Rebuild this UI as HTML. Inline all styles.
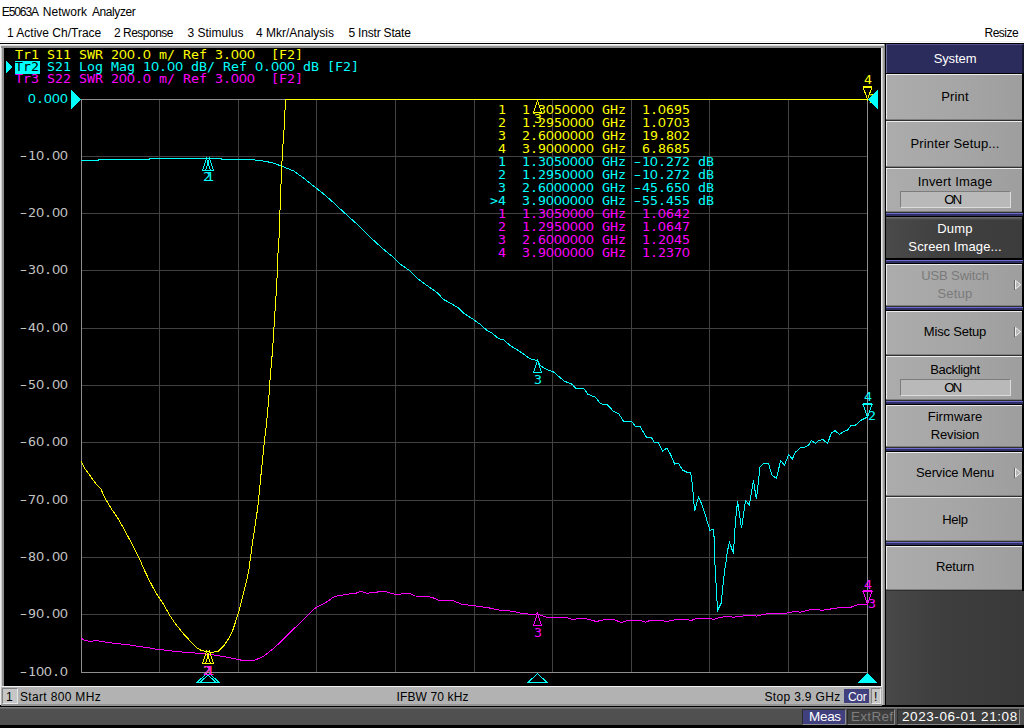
<!DOCTYPE html>
<html><head><meta charset="utf-8"><title>E5063A Network Analyzer</title>
<style>
html,body{margin:0;padding:0;}
body{width:1024px;height:728px;position:relative;overflow:hidden;background:#fff;font-family:"Liberation Sans",sans-serif;font-size:12px;color:#000;}
.abs{position:absolute;}
.ui{position:absolute;white-space:pre;font-family:"Liberation Sans",sans-serif;font-size:12px;line-height:14px;color:#000;}
.mono{position:absolute;white-space:pre;font-family:"DejaVu Sans Mono","Liberation Mono",monospace;font-size:12px;letter-spacing:0;line-height:13px;transform:scaleX(1.1073);transform-origin:0 0;}
.z{display:inline-block;width:7.2246px;text-align:center;font-family:"Liberation Sans",sans-serif;font-size:12.6px;line-height:13px;vertical-align:baseline;}
.h{display:inline-block;transform:scaleX(1.6);transform-origin:60% 50%;}
.y{color:#ffff00}.c{color:#00ffff}.m{color:#ff00ff}.g{color:#c4c4c4}
.skt{left:886px;width:138px;text-align:center;font-size:13px;line-height:16px;letter-spacing:0.2px;}
.sk{position:absolute;left:886px;width:138px;height:45px;background:linear-gradient(90deg,#9a9a9a,#a8a8a8 25%,#a8a8a8 60%,#9c9c9c);border-top:1px solid #dedede;border-bottom:1px solid #3a3a3a;font-size:13px;}
.sk span{position:absolute;left:0;width:138px;text-align:center;line-height:16px;white-space:pre;}
.sk.dk{background:linear-gradient(90deg,#4e4e4e,#444 40%,#3e3e3e);color:#fff;border-top-color:#666;}
.sk.dis{color:#7c7c7c;}
.bl{position:absolute;left:886px;width:138px;height:2px;background:#4c4c9e;border-top:1px solid #1c1c1c;border-bottom:1px solid #1c1c1c;}
.onbox{position:absolute;left:14px;top:24px;width:108px;height:14px;background:#b8b8b8;border:1px solid;border-color:#7a7a7a #d4d4d4 #d4d4d4 #7a7a7a;}
.arr{position:absolute;left:130px;top:16px;width:0;height:0;border-left:6px solid #c8c8c8;border-top:6px solid transparent;border-bottom:6px solid transparent;}
</style></head><body>
<div class="ui" style="left:1.7px;top:5px;"><span style="letter-spacing:-1.06px">E5063A </span><span style="position:absolute;left:41.1px;letter-spacing:0.03px">Network </span><span style="position:absolute;left:90.2px;letter-spacing:-0.39px">Analyzer</span></div>
<div class="ui" style="left:7px;top:26px;">1 Active Ch/Trace</div>
<div class="ui" style="left:114px;top:26px;letter-spacing:-0.5px;">2 Response</div>
<div class="ui" style="left:187.5px;top:26px;">3 Stimulus</div>
<div class="ui" style="left:256px;top:26px;">4 Mkr/Analysis</div>
<div class="ui" style="left:348.5px;top:26px;letter-spacing:-0.2px;">5 Instr State</div>
<div class="ui" style="left:984.5px;top:26px;letter-spacing:-0.5px;">Resize</div>

<div class="abs" style="left:0;top:43px;width:1024px;height:685px;background:#000;"></div>
<div class="abs" style="left:0;top:41px;width:1024px;height:1px;background:#f0f0f0;"></div>
<div class="abs" style="left:0;top:44px;width:885px;height:661px;background:linear-gradient(90deg,#ececec 0,#ececec 1px,#d0d0d0 1px,#d0d0d0 2px,#909090 2px,#909090 4px,#000 4px,#000 881px,#f2f2f2 881px,#e4e4e4 882px,#b0b0b0 883px,#8c8c8c 884px,#8c8c8c 885px);"></div>
<div class="abs" style="left:1px;top:44px;width:883px;height:4px;background:linear-gradient(180deg,#f8f8f8 0,#f8f8f8 1px,#d8d8d8 1px,#d8d8d8 2px,#909090 2px,#909090 4px);"></div>
<div class="abs" style="left:0;top:44px;width:1px;height:661px;background:#ececec;"></div>
<div class="abs" id="plotwin" style="left:4px;top:48px;width:877px;height:638px;background:#000;"></div>
<div class="abs" style="left:1px;top:686px;width:881px;height:20px;background:#b2b2b2;border-top:1px solid #f0f0f0;box-sizing:border-box;border-bottom:2px solid #949494"></div>
<div class="abs" style="left:2px;top:688px;width:14px;height:14px;background:#c6c6c6;border:1px solid;border-color:#808080 #e8e8e8 #e8e8e8 #808080;"></div>
<div class="ui" style="left:6px;top:690px;font-size:12px;">1</div>
<div class="ui" style="left:20px;top:690px;font-size:12px;letter-spacing:0.33px">Start 800 MHz</div>
<div class="ui" style="left:396.5px;top:690px;font-size:12px;letter-spacing:0.13px">IFBW 70 kHz</div>
<div class="ui" style="left:764.5px;top:690px;font-size:12px;letter-spacing:0.33px">Stop 3.9 GHz</div>
<div class="abs" style="left:844px;top:689px;width:25px;height:14px;background:#40407e;"></div>
<div class="ui" style="left:848px;top:690px;font-size:12px;letter-spacing:-0.35px;color:#fff;">Cor</div>
<div class="abs" style="left:871px;top:688px;width:8px;height:14px;background:#c6c6c6;border:1px solid;border-color:#808080 #e8e8e8 #e8e8e8 #808080;"></div>
<div class="ui" style="left:874px;top:690px;font-size:12px;">!</div>
<div class="abs" style="left:0;top:706px;width:1024px;height:1px;background:#000;"></div>
<div class="abs" style="left:885px;top:705px;width:139px;height:1px;background:#000;"></div>
<div class="abs" style="left:0;top:707px;width:1024px;height:18px;background:linear-gradient(180deg,#7c7c7c 0,#7c7c7c 1px,#666 1px,#666 2px,#505050 2px,#505050 100%);"></div>
<div class="abs" style="left:0;top:725px;width:1024px;height:3px;background:#000;"></div>
<div class="abs" style="left:802px;top:709px;width:42px;height:14px;background:#40407e;border:1px solid;border-color:#2a2a2a #8c8c8c #8c8c8c #2a2a2a;"></div>
<div class="ui" style="left:809px;top:709px;font-size:13.5px;line-height:16px;letter-spacing:-0.3px;color:#fff;">Meas</div>
<div class="abs" style="left:847px;top:709px;width:46px;height:14px;background:#3e3e3e;border:1px solid;border-color:#2a2a2a #8a8a8a #8a8a8a #2a2a2a;"></div>
<div class="ui" style="left:851px;top:709px;font-size:13.5px;line-height:16px;letter-spacing:0.3px;color:#7e7e7e;">ExtRef</div>
<div class="abs" style="left:897px;top:709px;width:121px;height:14px;background:#3e3e3e;border:1px solid;border-color:#2a2a2a #8a8a8a #8a8a8a #2a2a2a;"></div>
<div class="ui" style="left:902px;top:709px;font-size:13.5px;line-height:16px;letter-spacing:0.57px;color:#fff;">2023-06-01 21:08</div>
<div class="abs" style="left:886px;top:44px;width:138px;height:661px;background:linear-gradient(90deg,#484848,#3e3e3e 40%,#393939);"></div>
<div class="abs" style="left:886px;top:44px;width:138px;height:29px;background:#2c2c5c;border-left:1px solid #6c6c9c;border-top:1px solid #50508a;border-right:2px solid #16162e;box-sizing:border-box;"></div>
<div class="abs" style="left:886px;top:73px;width:138px;height:518px;background:#000;"></div>
<div class="ui skt" style="top:51px;color:#fff;letter-spacing:-0.1px">System</div>
<div class="abs" style="left:886px;top:74px;width:136px;height:47px;background:linear-gradient(90deg,#acacac,#a6a6a6 50%,#9e9e9e);"></div>
<div class="abs" style="left:886px;top:74px;width:136px;height:1px;background:#ececec;"></div>
<div class="abs" style="left:886px;top:74px;width:1px;height:45px;background:#ececec;"></div>
<div class="abs" style="left:886px;top:119px;width:136px;height:1px;background:#7e7e7e;"></div>
<div class="abs" style="left:886px;top:120px;width:136px;height:1px;background:#303030;"></div>
<div class="ui skt" style="top:89px;color:#000;letter-spacing:0.2px">Print</div>
<div class="abs" style="left:886px;top:121px;width:136px;height:47px;background:linear-gradient(90deg,#acacac,#a6a6a6 50%,#9e9e9e);"></div>
<div class="abs" style="left:886px;top:121px;width:136px;height:1px;background:#ececec;"></div>
<div class="abs" style="left:886px;top:121px;width:1px;height:45px;background:#ececec;"></div>
<div class="abs" style="left:886px;top:166px;width:136px;height:1px;background:#7e7e7e;"></div>
<div class="abs" style="left:886px;top:167px;width:136px;height:1px;background:#303030;"></div>
<div class="ui skt" style="top:136px;color:#000;letter-spacing:0.15px">Printer Setup...</div>
<div class="abs" style="left:886px;top:168px;width:136px;height:45px;background:linear-gradient(90deg,#acacac,#a6a6a6 50%,#9e9e9e);"></div>
<div class="abs" style="left:886px;top:168px;width:136px;height:1px;background:#ececec;"></div>
<div class="abs" style="left:886px;top:168px;width:1px;height:43px;background:#ececec;"></div>
<div class="abs" style="left:886px;top:211px;width:136px;height:1px;background:#7e7e7e;"></div>
<div class="abs" style="left:886px;top:212px;width:136px;height:1px;background:#303030;"></div>
<div class="abs" style="left:886px;top:213px;width:137px;height:1px;background:#6c6ccc;"></div>
<div class="abs" style="left:886px;top:214px;width:137px;height:2px;background:#2e2e62;"></div>
<div class="abs" style="left:900px;top:191px;width:109px;height:15px;background:#b9b9b9;border:1px solid;border-color:#7c7c7c #dcdcdc #dcdcdc #7c7c7c;"></div>
<div class="ui skt" style="top:174px;color:#000;letter-spacing:0.2px">Invert Image</div>
<div class="ui skt" style="top:192px;color:#000;letter-spacing:-1.5px;left:883.5px;">ON</div>
<div class="abs" style="left:886px;top:217px;width:136px;height:42px;background:linear-gradient(90deg,#4a4a4a,#404040 40%,#3c3c3c);"></div>
<div class="abs" style="left:886px;top:217px;width:136px;height:3px;background:linear-gradient(180deg,#7c7c7c,#404040);opacity:.8"></div>
<div class="abs" style="left:886px;top:258px;width:136px;height:2px;background:#000;"></div>
<div class="abs" style="left:886px;top:260px;width:137px;height:1px;background:#6c6ccc;"></div>
<div class="abs" style="left:886px;top:261px;width:137px;height:2px;background:#2e2e62;"></div>
<div class="ui skt" style="top:221px;color:#fff;letter-spacing:0.2px">Dump</div>
<div class="ui skt" style="top:239px;color:#fff;letter-spacing:0.1px;">Screen Image...</div>
<div class="abs" style="left:886px;top:264px;width:136px;height:43px;background:linear-gradient(90deg,#acacac,#a6a6a6 50%,#9e9e9e);"></div>
<div class="abs" style="left:886px;top:264px;width:136px;height:1px;background:#ececec;"></div>
<div class="abs" style="left:886px;top:264px;width:1px;height:41px;background:#ececec;"></div>
<div class="abs" style="left:886px;top:305px;width:136px;height:1px;background:#7e7e7e;"></div>
<div class="abs" style="left:886px;top:306px;width:136px;height:1px;background:#303030;"></div>
<div class="abs" style="left:886px;top:307px;width:137px;height:1px;background:#6c6ccc;"></div>
<div class="abs" style="left:886px;top:308px;width:137px;height:2px;background:#2e2e62;"></div>
<div class="ui skt" style="top:268px;color:#7a7a7a;letter-spacing:-0.1px">USB Switch</div>
<div class="ui skt" style="top:286px;color:#7a7a7a;letter-spacing:0.2px;">Setup</div>
<svg class="abs" style="left:1013px;top:279px" width="10" height="12" viewBox="0 0 10 12"><path d="M1.5 1V11" stroke="#666" stroke-width="1" fill="none"/><path d="M2.5 1.5L7.8 5.75L2.5 10Z" fill="#b6b6b6" stroke="#f0f0f0" stroke-width="1"/></svg>
<div class="abs" style="left:886px;top:311px;width:136px;height:45px;background:linear-gradient(90deg,#acacac,#a6a6a6 50%,#9e9e9e);"></div>
<div class="abs" style="left:886px;top:311px;width:136px;height:1px;background:#ececec;"></div>
<div class="abs" style="left:886px;top:311px;width:1px;height:43px;background:#ececec;"></div>
<div class="abs" style="left:886px;top:354px;width:136px;height:1px;background:#7e7e7e;"></div>
<div class="abs" style="left:886px;top:355px;width:136px;height:1px;background:#303030;"></div>
<div class="ui skt" style="top:324px;color:#000;letter-spacing:-0.2px">Misc Setup</div>
<svg class="abs" style="left:1013px;top:326px" width="10" height="12" viewBox="0 0 10 12"><path d="M1.5 1V11" stroke="#666" stroke-width="1" fill="none"/><path d="M2.5 1.5L7.8 5.75L2.5 10Z" fill="#b6b6b6" stroke="#f0f0f0" stroke-width="1"/></svg>
<div class="abs" style="left:886px;top:356px;width:136px;height:45px;background:linear-gradient(90deg,#acacac,#a6a6a6 50%,#9e9e9e);"></div>
<div class="abs" style="left:886px;top:356px;width:136px;height:1px;background:#ececec;"></div>
<div class="abs" style="left:886px;top:356px;width:1px;height:43px;background:#ececec;"></div>
<div class="abs" style="left:886px;top:399px;width:136px;height:1px;background:#7e7e7e;"></div>
<div class="abs" style="left:886px;top:400px;width:136px;height:1px;background:#303030;"></div>
<div class="abs" style="left:886px;top:401px;width:137px;height:1px;background:#6c6ccc;"></div>
<div class="abs" style="left:886px;top:402px;width:137px;height:2px;background:#2e2e62;"></div>
<div class="abs" style="left:900px;top:379px;width:109px;height:15px;background:#b9b9b9;border:1px solid;border-color:#7c7c7c #dcdcdc #dcdcdc #7c7c7c;"></div>
<div class="ui skt" style="top:362px;color:#000;letter-spacing:-0.37px">Backlight</div>
<div class="ui skt" style="top:380px;color:#000;letter-spacing:-1.5px;left:883.5px;">ON</div>
<div class="abs" style="left:886px;top:405px;width:136px;height:43px;background:linear-gradient(90deg,#acacac,#a6a6a6 50%,#9e9e9e);"></div>
<div class="abs" style="left:886px;top:405px;width:136px;height:1px;background:#ececec;"></div>
<div class="abs" style="left:886px;top:405px;width:1px;height:41px;background:#ececec;"></div>
<div class="abs" style="left:886px;top:446px;width:136px;height:1px;background:#7e7e7e;"></div>
<div class="abs" style="left:886px;top:447px;width:136px;height:1px;background:#303030;"></div>
<div class="abs" style="left:886px;top:448px;width:137px;height:1px;background:#6c6ccc;"></div>
<div class="abs" style="left:886px;top:449px;width:137px;height:2px;background:#2e2e62;"></div>
<div class="ui skt" style="top:409px;color:#000;letter-spacing:0.06px">Firmware</div>
<div class="ui skt" style="top:427px;color:#000;letter-spacing:-0.2px;">Revision</div>
<div class="abs" style="left:886px;top:452px;width:136px;height:45px;background:linear-gradient(90deg,#acacac,#a6a6a6 50%,#9e9e9e);"></div>
<div class="abs" style="left:886px;top:452px;width:136px;height:1px;background:#ececec;"></div>
<div class="abs" style="left:886px;top:452px;width:1px;height:43px;background:#ececec;"></div>
<div class="abs" style="left:886px;top:495px;width:136px;height:1px;background:#7e7e7e;"></div>
<div class="abs" style="left:886px;top:496px;width:136px;height:1px;background:#303030;"></div>
<div class="ui skt" style="top:465px;color:#000;letter-spacing:-0.12px">Service Menu</div>
<svg class="abs" style="left:1013px;top:467px" width="10" height="12" viewBox="0 0 10 12"><path d="M1.5 1V11" stroke="#666" stroke-width="1" fill="none"/><path d="M2.5 1.5L7.8 5.75L2.5 10Z" fill="#b6b6b6" stroke="#f0f0f0" stroke-width="1"/></svg>
<div class="abs" style="left:886px;top:497px;width:136px;height:45px;background:linear-gradient(90deg,#acacac,#a6a6a6 50%,#9e9e9e);"></div>
<div class="abs" style="left:886px;top:497px;width:136px;height:1px;background:#ececec;"></div>
<div class="abs" style="left:886px;top:497px;width:1px;height:43px;background:#ececec;"></div>
<div class="abs" style="left:886px;top:540px;width:136px;height:1px;background:#7e7e7e;"></div>
<div class="abs" style="left:886px;top:541px;width:136px;height:1px;background:#303030;"></div>
<div class="abs" style="left:886px;top:542px;width:137px;height:1px;background:#6c6ccc;"></div>
<div class="abs" style="left:886px;top:543px;width:137px;height:2px;background:#2e2e62;"></div>
<div class="ui skt" style="top:512px;color:#000;letter-spacing:-0.3px">Help</div>
<div class="abs" style="left:886px;top:546px;width:136px;height:45px;background:linear-gradient(90deg,#acacac,#a6a6a6 50%,#9e9e9e);"></div>
<div class="abs" style="left:886px;top:546px;width:136px;height:1px;background:#ececec;"></div>
<div class="abs" style="left:886px;top:546px;width:1px;height:43px;background:#ececec;"></div>
<div class="abs" style="left:886px;top:589px;width:136px;height:1px;background:#7e7e7e;"></div>
<div class="abs" style="left:886px;top:590px;width:136px;height:1px;background:#303030;"></div>
<div class="ui skt" style="top:559px;color:#000;letter-spacing:-0.16px">Return</div>
<div class="mono y" style="left:868px;top:93px;">1</div>
<svg class="abs" style="left:0;top:0" width="1024" height="728" viewBox="0 0 1024 728" shape-rendering="crispEdges">
<path d="M159.5 99V673M81 156.5H868M238.5 99V673M81 213.5H868M316.5 99V673M81 270.5H868M395.5 99V673M81 328.5H868M474.5 99V673M81 385.5H868M552.5 99V673M81 442.5H868M631.5 99V673M81 500.5H868M709.5 99V673M81 557.5H868M788.5 99V673M81 614.5H868" stroke="#424242" stroke-width="1" fill="none"/>
<rect x="81.5" y="99.5" width="786" height="573" stroke="#8e8e8e" stroke-width="1" fill="none"/>
<polyline points="81.4,638.3 84.8,640.5 90.6,641.4 96.5,640.5 101.4,641.4 107.2,642.4 115.1,643.4 124.8,644.4 133.1,645.4 138.5,646.4 146.3,647.4 152.2,648.4 158.0,649.5 167.8,650.3 175.1,651.5 188.6,652.5 204.3,653.8 213.7,655.0 226.2,657.0 235.6,658.9 241.8,660.3 254.4,660.3 260.6,657.7 264.8,655.4 272.6,649.1 279.4,643.2 287.2,635.4 295.1,627.6 302.9,620.4 307.2,615.9 313.6,609.1 318.5,606.1 326.3,602.2 334.1,596.8 339.0,595.4 345.8,594.8 351.7,593.4 356.6,593.0 360.5,591.3 367.3,593.4 371.2,592.3 377.1,592.1 381.0,591.1 385.9,591.5 390.8,593.2 395.6,594.4 400.5,594.4 402.5,593.4 409.3,593.4 415.2,596.0 427.9,596.4 432.8,597.7 438.6,600.3 452.4,600.4 462.1,604.3 475.0,605.8 489.0,607.9 499.7,610.1 512.6,611.2 521.2,613.3 531.9,614.4 537.3,613.9 547.0,617.4 566.3,617.6 572.8,619.5 580.3,618.5 585.6,618.7 596.4,621.5 606.1,619.3 613.6,619.3 621.1,622.5 628.6,620.2 640.4,620.4 645.8,622.3 650.1,620.2 660.8,620.2 666.1,621.7 676.2,619.5 687.4,619.5 690.8,620.6 696.4,618.6 709.9,618.4 713.3,619.5 720.0,617.5 727.9,616.3 733.5,617.2 748.1,615.4 757.1,616.1 763.8,614.3 772.8,613.2 786.3,613.2 795.3,611.2 799.8,612.3 813.2,609.1 822.2,610.3 835.7,608.2 842.4,607.1 851.4,607.1 855.9,605.1 862.7,604.2 867.1,604.2" stroke="#ff00ff" stroke-width="1" fill="none"/>
<polyline points="81.0,160.5 98.0,160.5 98.0,159.5 149.0,159.5 149.0,158.5 221.0,158.5 221.0,159.5 247.8,159.5 259.5,160.3 272.2,162.7 281.9,166.2 293.7,171.0 303.4,177.9 313.2,185.7 323.0,193.5 332.7,201.9 342.5,211.1 352.3,219.9 359.7,226.6 364.6,231.9 376.3,242.8 385.1,250.6 392.9,256.9 399.7,263.7 409.5,270.5 419.2,279.9 428.0,286.2 436.8,292.4 443.7,299.5 451.5,303.8 458.3,307.7 464.2,313.5 473.9,319.8 480.8,324.8 486.6,330.1 492.5,333.4 498.3,338.5 503.8,339.9 509.7,345.2 521.4,352.5 530.2,358.9 537.4,360.5 540.9,366.1 547.8,370.0 553.6,372.0 564.4,381.2 572.2,384.3 576.1,389.0 583.9,388.6 587.8,394.1 595.6,397.4 600.5,403.8 607.3,404.6 613.2,411.1 619.0,414.0 623.3,421.0 631.7,421.4 635.1,426.1 640.1,426.5 646.4,437.0 651.3,437.4 654.6,442.9 658.1,442.3 662.4,451.1 666.9,448.2 670.8,455.0 674.7,464.1 678.6,463.3 682.5,470.0 687.2,472.4 690.7,472.4 692.7,487.6 694.6,511.1 698.5,497.0 701.3,503.2 706.0,517.3 709.9,530.2 713.1,529.5 714.6,540.8 714.7,559.5 715.8,579.6 716.9,599.6 717.6,610.3 721.5,602.5 722.5,588.8 723.7,579.0 724.7,569.8 725.9,562.5 727.4,551.2 729.5,542.1 733.4,553.5 735.4,522.0 737.6,500.9 741.5,528.3 745.5,500.4 749.4,505.1 753.4,480.1 756.4,499.3 760.0,467.2 763.9,463.3 768.6,463.8 771.8,475.0 776.5,478.5 780.6,460.5 784.5,465.2 788.6,454.5 792.3,459.2 795.3,452.3 800.7,447.5 804.5,447.5 808.8,445.0 811.2,440.5 815.7,443.4 818.4,440.7 822.7,439.4 827.6,443.4 831.3,433.0 835.1,430.6 839.6,434.6 843.1,431.7 847.4,430.3 851.2,425.4 855.5,425.2 860.3,420.6 867.3,417.1" stroke="#00ffff" stroke-width="1" fill="none"/>
<polyline points="81.3,461.3 84.8,468.6 90.6,476.4 95.5,483.2 101.0,489.1 105.3,498.8 111.2,508.6 118.0,518.4 123.5,528.1 128.7,537.9 134.0,547.7 138.9,557.4 143.6,568.5 149.3,580.3 155.3,591.8 163.6,604.4 169.8,615.4 176.1,624.8 183.9,634.2 191.8,642.8 196.4,647.5 201.1,650.3 206.6,651.7 212.1,652.5 218.4,651.1 223.8,645.9 228.5,638.9 232.5,631.1 235.6,621.7 238.7,612.3 241.1,602.9 243.4,593.5 245.8,584.1 248.9,570.0 251.8,547.7 254.7,528.1 257.6,508.6 259.6,489.1 261.5,469.5 263.2,453.0 264.6,440.0 266.4,424.4 268.8,398.0 270.4,375.0 272.7,348.6 274.7,315.6 276.7,286.0 278.0,253.0 279.4,232.0 280.4,196.4 281.4,176.0 282.3,154.5 283.9,132.0 285.0,110.0 285.5,99.5 867.0,99.5" stroke="#ffff00" stroke-width="1" fill="none"/>
<path d="M206.5 651.5L202.5 663.5H210.5Z" stroke="#ff00ff" stroke-width="1" fill="none"/>
<path d="M209.5 651.5L205.5 663.5H213.5Z" stroke="#ff00ff" stroke-width="1" fill="none"/>
<path d="M537.5 613.5L533.5 625.5H541.5Z" stroke="#ff00ff" stroke-width="1" fill="none"/>
<path d="M867.5 604L863.0 591.5H872.0Z M863.0 590.5H872.0" stroke="#ff00ff" stroke-width="1" fill="none"/>
<path d="M206.5 158.5L202.5 170.5H210.5Z" stroke="#00ffff" stroke-width="1" fill="none"/>
<path d="M209.5 158.5L205.5 170.5H213.5Z" stroke="#00ffff" stroke-width="1" fill="none"/>
<path d="M537.5 360.5L533.5 372.5H541.5Z" stroke="#00ffff" stroke-width="1" fill="none"/>
<path d="M867.5 417L863.0 404.5H872.0Z M863.0 403.5H872.0" stroke="#00ffff" stroke-width="1" fill="none"/>
<path d="M206.5 651.5L202.5 663.5H210.5Z" stroke="#ffff00" stroke-width="1" fill="none"/>
<path d="M209.5 651.5L205.5 663.5H213.5Z" stroke="#ffff00" stroke-width="1" fill="none"/>
<path d="M537.5 100.5L533.5 112.5H541.5Z" stroke="#ffff00" stroke-width="1" fill="none"/>
<path d="M867.5 99.5L863.0 87.0H872.0Z M863.0 86.0H872.0" stroke="#ffff00" stroke-width="1" fill="none"/>
<path d="M206.5 673.5L197.0 682.5H216.0Z" stroke="#00ffff" stroke-width="1" fill="none"/>
<path d="M209.5 673.5L200.0 682.5H219.0Z" stroke="#00ffff" stroke-width="1" fill="none"/>
<path d="M537.5 673.5L528.0 682.5H547.0Z" stroke="#00ffff" stroke-width="1" fill="none"/>
<path d="M867.5 673L857 683H878Z" fill="#00ffff"/>
<path d="M81 99.5L71 90V109Z" fill="#00ffff"/>
<path d="M868 99.5L878 90V109Z" fill="#00ffff"/>
<path d="M12 67L6 61V73Z" fill="#00ffff"/>
</svg>
<div class="mono y" style="left:15px;top:49px;">Tr1 S11 SWR 2<span class="z">0</span><span class="z">0</span>.<span class="z">0</span> m/ Ref 3.<span class="z">0</span><span class="z">0</span><span class="z">0</span>  [F2]</div>
<div class="abs" style="left:15px;top:61px;width:25px;height:13px;background:#00ffff"></div>
<div class="mono c" style="left:15px;top:61px;"><span style="color:#000">Tr2</span> S21 Log Mag 1<span class="z">0</span>.<span class="z">0</span><span class="z">0</span> dB/ Ref <span class="z">0</span>.<span class="z">0</span><span class="z">0</span><span class="z">0</span> dB [F2]</div>
<div class="mono m" style="left:15px;top:73px;">Tr3 S22 SWR 2<span class="z">0</span><span class="z">0</span>.<span class="z">0</span> m/ Ref 3.<span class="z">0</span><span class="z">0</span><span class="z">0</span>  [F2]</div>
<div class="mono c" style="left:28px;top:93px;"><span class="z">0</span>.<span class="z">0</span><span class="z">0</span><span class="z">0</span></div>
<div class="mono g" style="left:20px;top:150px;"><span class="h">-</span>1<span class="z">0</span>.<span class="z">0</span><span class="z">0</span></div>
<div class="mono g" style="left:20px;top:207px;"><span class="h">-</span>2<span class="z">0</span>.<span class="z">0</span><span class="z">0</span></div>
<div class="mono g" style="left:20px;top:264px;"><span class="h">-</span>3<span class="z">0</span>.<span class="z">0</span><span class="z">0</span></div>
<div class="mono g" style="left:20px;top:322px;"><span class="h">-</span>4<span class="z">0</span>.<span class="z">0</span><span class="z">0</span></div>
<div class="mono g" style="left:20px;top:379px;"><span class="h">-</span>5<span class="z">0</span>.<span class="z">0</span><span class="z">0</span></div>
<div class="mono g" style="left:20px;top:436px;"><span class="h">-</span>6<span class="z">0</span>.<span class="z">0</span><span class="z">0</span></div>
<div class="mono g" style="left:20px;top:494px;"><span class="h">-</span>7<span class="z">0</span>.<span class="z">0</span><span class="z">0</span></div>
<div class="mono g" style="left:20px;top:551px;"><span class="h">-</span>8<span class="z">0</span>.<span class="z">0</span><span class="z">0</span></div>
<div class="mono g" style="left:20px;top:608px;"><span class="h">-</span>9<span class="z">0</span>.<span class="z">0</span><span class="z">0</span></div>
<div class="mono g" style="left:20px;top:666px;"><span class="h">-</span>1<span class="z">0</span><span class="z">0</span>.<span class="z">0</span></div>
<div class="mono y" style="left:490px;top:104px;"> 1  1.3<span class="z">0</span>5<span class="z">0</span><span class="z">0</span><span class="z">0</span><span class="z">0</span> GHz  1.<span class="z">0</span>695</div>
<div class="mono y" style="left:490px;top:117px;"> 2  1.295<span class="z">0</span><span class="z">0</span><span class="z">0</span><span class="z">0</span> GHz  1.<span class="z">0</span>7<span class="z">0</span>3</div>
<div class="mono y" style="left:490px;top:130px;"> 3  2.6<span class="z">0</span><span class="z">0</span><span class="z">0</span><span class="z">0</span><span class="z">0</span><span class="z">0</span> GHz  19.8<span class="z">0</span>2</div>
<div class="mono y" style="left:490px;top:143px;"> 4  3.9<span class="z">0</span><span class="z">0</span><span class="z">0</span><span class="z">0</span><span class="z">0</span><span class="z">0</span> GHz  6.8685</div>
<div class="mono c" style="left:490px;top:156px;"> 1  1.3<span class="z">0</span>5<span class="z">0</span><span class="z">0</span><span class="z">0</span><span class="z">0</span> GHz <span class="h">-</span>1<span class="z">0</span>.272 dB</div>
<div class="mono c" style="left:490px;top:169px;"> 2  1.295<span class="z">0</span><span class="z">0</span><span class="z">0</span><span class="z">0</span> GHz <span class="h">-</span>1<span class="z">0</span>.272 dB</div>
<div class="mono c" style="left:490px;top:182px;"> 3  2.6<span class="z">0</span><span class="z">0</span><span class="z">0</span><span class="z">0</span><span class="z">0</span><span class="z">0</span> GHz <span class="h">-</span>45.65<span class="z">0</span> dB</div>
<div class="mono c" style="left:490px;top:195px;">&gt;4  3.9<span class="z">0</span><span class="z">0</span><span class="z">0</span><span class="z">0</span><span class="z">0</span><span class="z">0</span> GHz <span class="h">-</span>55.455 dB</div>
<div class="mono m" style="left:490px;top:208px;"> 1  1.3<span class="z">0</span>5<span class="z">0</span><span class="z">0</span><span class="z">0</span><span class="z">0</span> GHz  1.<span class="z">0</span>642</div>
<div class="mono m" style="left:490px;top:221px;"> 2  1.295<span class="z">0</span><span class="z">0</span><span class="z">0</span><span class="z">0</span> GHz  1.<span class="z">0</span>647</div>
<div class="mono m" style="left:490px;top:234px;"> 3  2.6<span class="z">0</span><span class="z">0</span><span class="z">0</span><span class="z">0</span><span class="z">0</span><span class="z">0</span> GHz  1.2<span class="z">0</span>45</div>
<div class="mono m" style="left:490px;top:247px;"> 4  3.9<span class="z">0</span><span class="z">0</span><span class="z">0</span><span class="z">0</span><span class="z">0</span><span class="z">0</span> GHz  1.237<span class="z">0</span></div>
<div class="mono y" style="left:533.5px;top:113px;">3</div>
<div class="mono c" style="left:533.5px;top:374px;">3</div>
<div class="mono m" style="left:533.5px;top:627px;">3</div>
<div class="mono y" style="left:202.5px;top:665px;">2</div>
<div class="mono y" style="left:205.5px;top:665px;">1</div>
<div class="mono c" style="left:202.5px;top:171px;">2</div>
<div class="mono c" style="left:205.5px;top:171px;">1</div>
<div class="mono m" style="left:202.5px;top:665px;">2</div>
<div class="mono m" style="left:205.5px;top:665px;">1</div>
<div class="mono y" style="left:863.5px;top:74px;">4</div>
<div class="mono c" style="left:863.5px;top:391px;">4</div>
<div class="mono m" style="left:863.5px;top:579px;">4</div>
<div class="mono c" style="left:868px;top:410px;">2</div>
<div class="mono m" style="left:868px;top:598px;">3</div>
</body></html>
